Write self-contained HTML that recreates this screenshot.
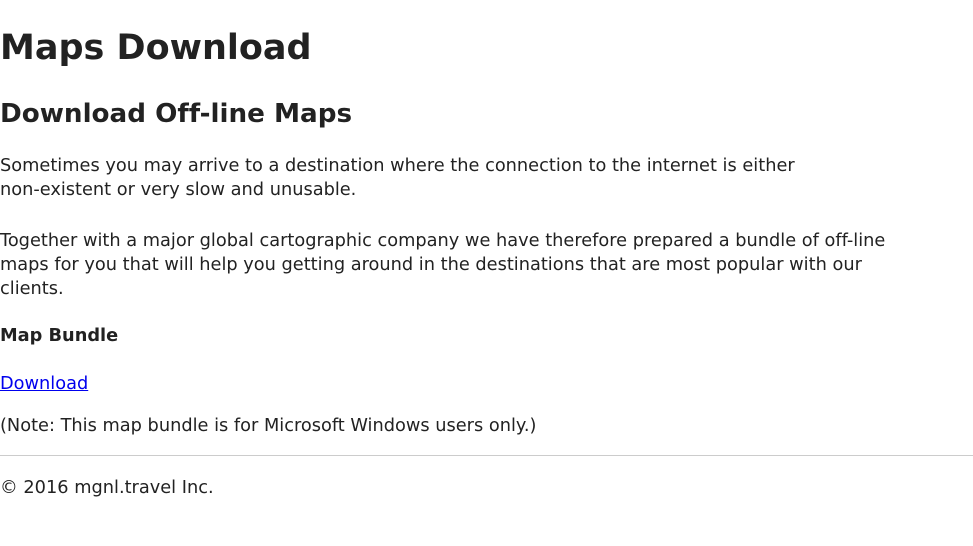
<!DOCTYPE html>
<html><head><meta charset="utf-8"><style>
html,body{margin:0;padding:0;background:#fff;width:973px;height:546px;overflow:hidden}
body{font-family:"DejaVu Sans",sans-serif;color:#222;font-size:17.75px;line-height:24px;font-variant-ligatures:none}
.a{position:absolute;left:0;margin:0;white-space:nowrap}
h1{font-size:35px;font-weight:bold;line-height:40px}
h2{font-size:26.2px;font-weight:bold;line-height:30px}
a{color:#00e}
hr{position:absolute;left:0;top:455px;width:973px;margin:0;border:0;border-top:1px solid #ccc}
</style></head><body>
<h1 class="a" style="top:28px">Maps Download</h1>
<h2 class="a" style="top:99px">Download Off-line Maps</h2>
<p class="a" style="top:154px">Sometimes you may arrive to a destination where the connection to the internet is either<br>non-existent or very slow and unusable.</p>
<p class="a" style="top:229px">Together with a major global cartographic company we have therefore prepared a bundle of off-line<br>maps for you that will help you getting around in the destinations that are most popular with our<br>clients.</p>
<p class="a" style="top:324px;font-weight:bold">Map Bundle</p>
<p class="a" style="top:372px"><a href="#">Download</a></p>
<p class="a" style="top:414px">(Note: This map bundle is for Microsoft Windows users only.)</p>
<hr>
<p class="a" style="top:476px">© 2016 mgnl.travel Inc.</p>
</body></html>
